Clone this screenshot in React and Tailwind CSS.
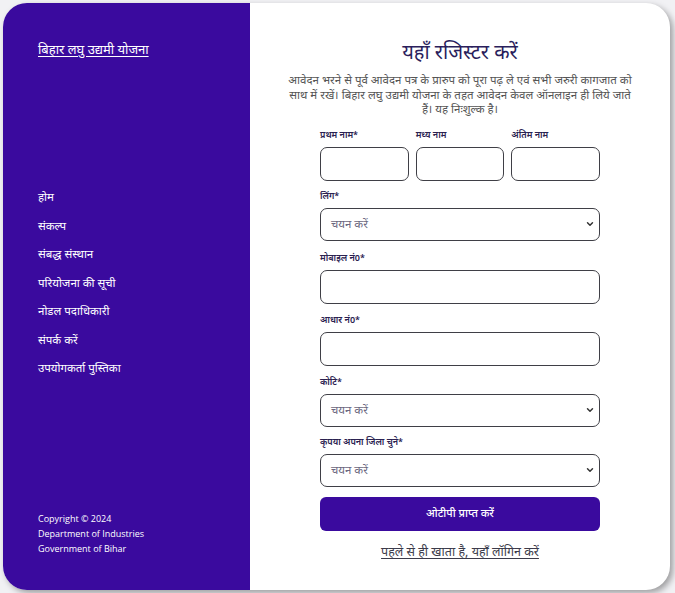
import { ChevronDown } from 'lucide-react'

const nav = ['होम', 'संकल्प', 'संबद्ध संस्थान', 'परियोजना की सूची', 'नोडल पदाधिकारी', 'संपर्क करें', 'उपयोगकर्ता पुस्तिका']

const font = { fontFamily: '"Noto Sans", "Open Sans", sans-serif' }

function Label({ children }) {
  return <label className="block text-[9px] font-semibold text-[#2a2150] mb-[6px] leading-[12px]">{children}</label>
}

function Select() {
  return (
    <div className="relative h-[33px] rounded-[7px] border border-[#3f3f46] flex items-center px-[10px]">
      <span className="text-[11.5px] text-[#6b6780]">चयन करें</span>
      <ChevronDown size={10} strokeWidth={3.5} className="absolute right-[4px] text-[#333]" />
    </div>
  )
}

function Input({ className = '' }) {
  return <div className={`h-[34px] rounded-[7px] border border-[#3f3f46] bg-white ${className}`} />
}

export default function App() {
  return (
    <div className="w-[675px] h-[593px] bg-[#f1f1f4] pt-[3px] pl-[3px] pr-[5px] pb-[3px]" style={font}>
      <div className="flex h-full rounded-[24px] overflow-hidden shadow-[3px_3px_6px_rgba(0,0,0,0.35)] bg-white">
        <aside className="w-[247px] shrink-0 bg-[#3a0a9e] text-white flex flex-col pl-[35px] pt-[37px] pb-[34px]">
          <a className="text-[13px] underline underline-offset-2 leading-[18px]">बिहार लघु उद्यमी योजना</a>
          <nav className="mt-[130px] flex flex-col gap-[10.5px]">
            {nav.map(n => (
              <span key={n} className="text-[11.5px] leading-[18px]">{n}</span>
            ))}
          </nav>
          <div className="mt-auto text-[9px] leading-[15px] font-medium" style={{ fontFamily: '"Open Sans", "Noto Sans", sans-serif' }}>
            <div>Copyright © 2024</div>
            <div>Department of Industries</div>
            <div>Government of Bihar</div>
          </div>
        </aside>
        <main className="flex-1 flex flex-col items-center pt-[35px]">
          <h1 className="text-[20px] text-[#2a1e5c] leading-[28px]">यहाँ रजिस्टर करें</h1>
          <p className="mt-[7px] w-[347px] text-center text-[11.5px] leading-[14.5px] text-[#555]">
            आवेदन भरने से पूर्व आवेदन पत्र के प्रारुप को पूरा पढ़ ले एवं सभी जरुरी कागजात को साथ में रखें। बिहार लघु उद्यमी योजना के तहत आवेदन केवल ऑनलाइन ही लिये जाते हैं। यह निःशुल्क है।
          </p>
          <form className="w-[280px] mt-[12px] flex flex-col">
            <div className="grid grid-cols-3 gap-[7px]">
              <div><Label>प्रथम नाम*</Label><Input /></div>
              <div><Label>मध्य नाम</Label><Input /></div>
              <div><Label>अंतिम नाम</Label><Input /></div>
            </div>
            <div className="mt-[9px]"><Label>लिंग*</Label><Select /></div>
            <div className="mt-[11px]"><Label>मोबाइल नं0*</Label><Input /></div>
            <div className="mt-[10px]"><Label>आधार नं0*</Label><Input /></div>
            <div className="mt-[10px]"><Label>कोटि*</Label><Select /></div>
            <div className="mt-[9px]"><Label>कृपया अपना जिला चुने*</Label><Select /></div>
            <button type="button" className="mt-[10px] h-[34px] rounded-[6px] bg-[#3a0a9e] text-white text-[11px] font-medium">ओटीपी प्राप्त करें</button>
            <a className="mt-[12px] text-center text-[12.5px] text-[#3b3b4a] underline underline-offset-2">पहले से ही खाता है, यहाँ लॉगिन करें</a>
          </form>
        </main>
      </div>
    </div>
  )
}
